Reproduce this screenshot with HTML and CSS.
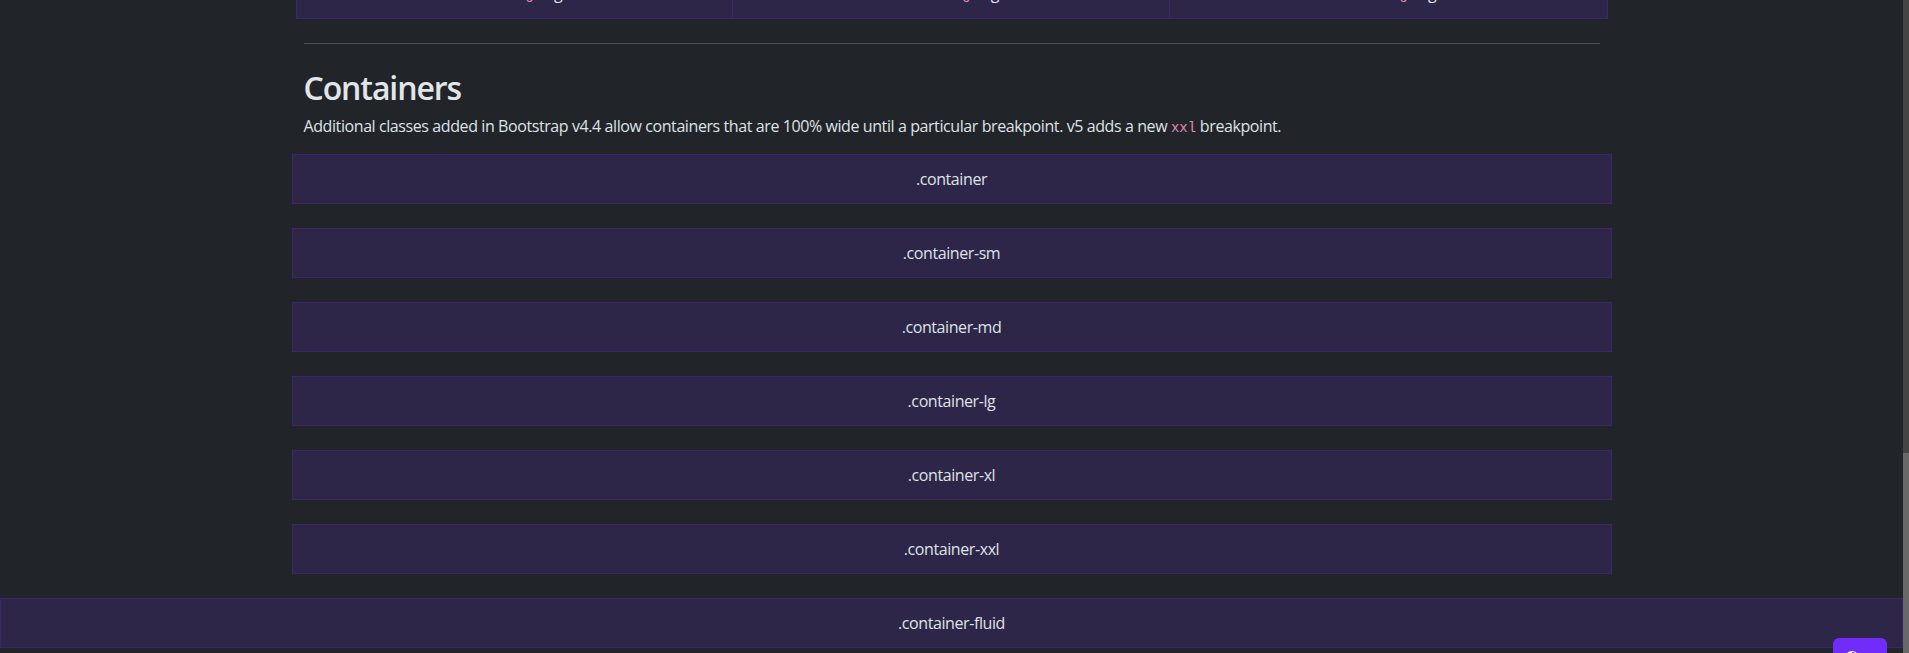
FILE: index.html
```html
<!DOCTYPE html>
<html lang="en">
<head>
<meta charset="utf-8">
<title>Grid Template · Bootstrap</title>
<link rel="stylesheet" href="styles.css">
</head>
<body>
<main class="page">
  <div class="container intro">
    <div class="row-g3">
      <div class="grid-col">Column with <code>.g-3</code> gutters</div>
      <div class="grid-col">Column with <code>.g-3</code> gutters</div>
      <div class="grid-col">Column with <code>.g-3</code> gutters</div>
    </div>
    <hr class="rule">
    <h2 class="title">Containers</h2>
    <p class="lead-text">Additional classes added in Bootstrap v4.4 allow containers that are 100% wide until a particular breakpoint. v5 adds a new <code>xxl</code> breakpoint.</p>
  </div>
  <div class="container themed">.container</div>
  <div class="container themed">.container-sm</div>
  <div class="container themed">.container-md</div>
  <div class="container themed">.container-lg</div>
  <div class="container themed">.container-xl</div>
  <div class="container themed">.container-xxl</div>
  <div class="fluid themed">.container-fluid</div>
</main>
<div class="scrollbar"><div class="thumb"></div></div>
<div class="mode-toggle">
  <svg class="mode-icon" width="16" height="16" viewBox="0 0 16 16" fill="currentColor"><path d="M8 15A7 7 0 1 0 8 1v14zm0 1A8 8 0 1 1 8 0a8 8 0 0 1 0 16z"/></svg>
  <span class="caret"></span>
</div>
</body>
</html>
```

FILE: styles.css
```css
* { box-sizing: border-box; }
html, body {
  margin: 0;
  height: 100%;
  overflow: hidden;
  background: #212529;
}
body {
  color: #dee2e6;
  font-family: "Open Sans", "Noto Sans", sans-serif;
  font-size: 16px;
  line-height: 1.5;
  letter-spacing: -0.41px;
}
.page {
  width: 1903px;
  margin-top: -32px;
}
.container {
  width: 1320px;
  margin: 0 auto;
  padding: 0 12px;
}
.row-g3 {
  display: grid;
  grid-template-columns: repeat(3, 1fr);
  margin: 0 -8px;
}
.grid-col {
  padding: 12px 8px;
  text-align: center;
  background: #2d2648;
  border: 1px solid #392767;
  letter-spacing: -0.6px;
}
.grid-col + .grid-col { border-left: 0; }
code {
  font-family: "Liberation Mono", "DejaVu Sans Mono", monospace;
  font-size: 0.875em;
  color: #e685b5;
  letter-spacing: 0;
}
.rule {
  margin: 24px 0 25px;
  border: 0;
  border-top: 1px solid #505458;
  height: 0;
}
.title {
  margin: 0 0 7px;
  font-size: 32px;
  font-weight: 600;
  line-height: 1.2;
  letter-spacing: -1.1px;
  color: #e3e6e9;
}
.lead-text {
  margin: 0 0 15px;
}
.themed {
  padding: 12px;
  margin-bottom: 24px;
  text-align: center;
  background: #2d2648;
  border: 1px solid #392767;
}
.fluid {
  width: 100%;
}
.scrollbar {
  position: fixed;
  top: 0;
  right: 0;
  width: 6px;
  height: 100%;
  background: #444444;
}
.thumb {
  position: absolute;
  left: 0;
  right: 0;
  top: 453px;
  bottom: 0;
  background: #686868;
}
.mode-toggle {
  position: fixed;
  top: 638px;
  right: 22px;
  width: 54px;
  height: 40px;
  padding: 8px 12px;
  display: flex;
  align-items: center;
  gap: 6px;
  background: #712cf9;
  border-radius: 6px;
  color: #ffffff;
}
.caret {
  width: 0;
  height: 0;
  border-top: 5px solid #ffffff;
  border-left: 5px solid transparent;
  border-right: 5px solid transparent;
}
```
